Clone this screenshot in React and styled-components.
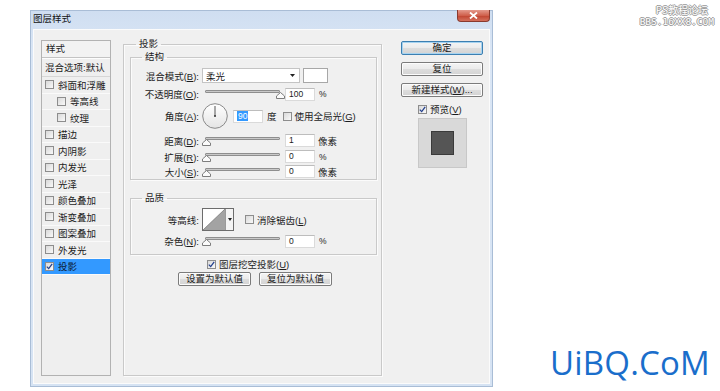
import React from 'react'
import styled, { createGlobalStyle } from 'styled-components'

const GlobalStyle = createGlobalStyle`
  html, body { margin: 0; padding: 0; background: #fff; }
  body {
    font-family: "Liberation Sans", "Noto Sans CJK SC", sans-serif;
    font-size: 9.5px;
    color: #1c1c1c;
  }
  #root { width: 720px; height: 391px; overflow: hidden; }
`

const Page = styled.div`
  position: relative;
  width: 720px;
  height: 391px;
  box-sizing: border-box;
  padding: 10px 0 0 30px;
`

const Window = styled.div`
  width: 463px;
  height: 377px;
  box-sizing: border-box;
  display: flex;
  flex-direction: column;
  background: linear-gradient(#cfdef1, #dae6f5 40px, #d6e3f3);
  border: 1px solid #a9bdd6;
  padding: 0 2px 2px 2px;
`

const TitleBar = styled.div`
  height: 18px;
  flex: none;
  display: flex;
  justify-content: space-between;
  align-items: flex-start;
`

const Title = styled.span`
  line-height: 15px;
  color: #111;
`

const CloseBtn = styled.div`
  width: 33px;
  height: 12px;
  margin-top: -1px;
  box-sizing: border-box;
  border: 1px solid #8a3a2e;
  border-top: none;
  border-radius: 0 0 4px 4px;
  background: linear-gradient(#e49a8c, #d0604c 50%, #c0432f 51%, #d4705c);
  display: flex;
  align-items: center;
  justify-content: center;
`

const Body = styled.div`
  flex: 1;
  box-sizing: border-box;
  background: #f0f0f0;
  border: 1px solid #fbfbfb;
  padding: 10px 0 0 7px;
  display: flex;
  align-items: flex-start;
`

/* ---------- left list ---------- */
const List = styled.div`
  width: 70px;
  height: 336px;
  box-sizing: border-box;
  border: 1px solid #b2b2b2;
  background: #efefef;
  display: flex;
  flex-direction: column;
`

const ListHead = styled.div`
  height: 16px;
  line-height: 16px;
  padding-left: 4px;
  border-bottom: 1px solid #c3c3c3;
  background: #f2f2f2;
`

const ListBlend = styled.div`
  height: 17px;
  line-height: 17px;
  padding-left: 3px;
  border-top: 1px solid #fdfdfd;
  border-bottom: 1px solid #d6d6d6;
  white-space: nowrap;
`

const ListItem = styled.div`
  height: 16.5px;
  box-sizing: border-box;
  display: flex;
  align-items: center;
  gap: 4px;
  padding-left: ${p => (p.$indent ? 15 : 3)}px;
  border-bottom: 1px solid #fafafa;
  background: ${p => (p.$active ? '#3399ff' : 'transparent')};
  color: ${p => (p.$active ? '#0c1a33' : 'inherit')};
  white-space: nowrap;
`

/* ---------- group boxes ---------- */
const Group = styled.fieldset`
  margin: ${p => p.$mt || 0}px 0 0 0;
  min-inline-size: 0;
  box-sizing: border-box;
  border: 1px solid #c9c9c9;
  box-shadow: inset 1px 1px 0 #fbfbfb, 1px 1px 0 #fbfbfb;
  padding: ${p => p.$pad};
  height: ${p => (p.$h ? p.$h + 'px' : 'auto')};
  display: flex;
  flex-direction: column;
`

const Legend = styled.legend`
  line-height: 12px;
  height: 12px;
  padding: 0 3px;
  margin-left: ${p => p.$ml}px;
`

const Main = styled.div`
  width: 259px;
  margin-left: 12px;
  margin-top: -2px;
`

const Row = styled.div`
  display: flex;
  align-items: center;
  height: ${p => p.$h || 14}px;
  margin-top: ${p => p.$mt || 0}px;
  padding-left: ${p => p.$pl || 0}px;
  white-space: nowrap;
`

const Label = styled.span`
  width: 68px;
  flex: none;
  text-align: right;
  margin-right: 3px;
`

const Select = styled.div`
  width: 98px;
  height: 15px;
  box-sizing: border-box;
  background: #fff;
  border: 1px solid #c4c4c4;
  display: flex;
  align-items: center;
  justify-content: space-between;
  padding: 0 4px 0 3px;
`

const Swatch = styled.div`
  width: 25px;
  height: 15px;
  margin-left: 3px;
  box-sizing: border-box;
  background: #fff;
  border: 1px solid #a7a7a7;
`

const SliderWrap = styled.div`
  position: relative;
  width: 80px;
  height: 10px;
  flex: none;
`

const Track = styled.div`
  margin: 1px 0 0 3px;
  width: 75px;
  height: 3px;
  box-sizing: border-box;
  border: 1px solid #8e8e8e;
  border-radius: 1px;
  background: #c9c9c9;
`

const Thumb = styled.svg`
  position: absolute;
  top: 3px;
`

const Field = styled.div`
  width: 30px;
  height: 13px;
  margin-left: ${p => p.$ml ?? 3}px;
  box-sizing: border-box;
  background: #fff;
  border: 1px solid #dadada;
  border-top-color: #bdbdbd;
  padding-left: 3px;
  line-height: 11px;
  font-size: 8.5px;
  flex: none;
`

const Selected = styled.span`
  background: #3399ff;
  color: #fff;
  padding: 0 1px;
`

const Unit = styled.span`
  margin-left: ${p => p.$ml ?? 4}px;
  font-size: ${p => (p.$latin ? '8.5px' : 'inherit')};
`

const CheckLabel = styled.span`
  display: inline-flex;
  align-items: center;
  gap: 3px;
  margin-left: ${p => p.$ml || 0}px;
  white-space: nowrap;
`

const Box = styled.span`
  width: 9px;
  height: 9px;
  box-sizing: border-box;
  border: 1px solid #8d8d8d;
  background: linear-gradient(135deg, #d9d9d9, #f9f9f9);
  display: inline-flex;
  align-items: center;
  justify-content: center;
  flex: none;
`

const Contour = styled.div`
  display: flex;
  height: 23px;
  box-sizing: border-box;
  border: 1px solid #6c6c6c;
  background: #fff;
`

const ContourArrow = styled.div`
  width: 7px;
  border-left: 1px solid #9a9a9a;
  background: #f4f4f4;
  display: flex;
  align-items: center;
  justify-content: center;
`

const Button = styled.div`
  width: ${p => p.$w || 82}px;
  height: 14px;
  box-sizing: border-box;
  border: 1px solid ${p => (p.$default ? '#3c7fb1' : '#7b7b7b')};
  box-shadow: ${p => (p.$default ? 'inset 0 0 0 1px #a6d3f0' : 'inset 0 0 0 1px #fcfcfc')};
  border-radius: 2px;
  background: linear-gradient(#f4f4f4, #ebebeb 50%, #dddddd 51%, #d3d3d3);
  display: flex;
  align-items: center;
  justify-content: center;
  line-height: 12px;
  flex: none;
`

const ButtonRow = styled.div`
  display: flex;
  gap: 8px;
  margin-top: 2px;
  padding-left: 48px;
`

/* ---------- right column ---------- */
const Side = styled.div`
  width: 82px;
  margin-left: 19px;
  margin-top: 1px;
  display: flex;
  flex-direction: column;
  gap: 7px;
`

const PreviewRow = styled.div`
  display: flex;
  align-items: center;
  padding-left: 17px;
  margin-top: -1px;
  height: 12px;
`

const Preview = styled.div`
  width: 49px;
  height: 50px;
  margin: -4px 0 0 17px;
  box-sizing: border-box;
  border: 1px solid #c8c8c8;
  background: #d9d9d9;
  display: flex;
  align-items: center;
  justify-content: center;
`

const PreviewSquare = styled.div`
  width: 23px;
  height: 24px;
  box-sizing: border-box;
  border: 1px solid #3a3a3a;
  background: #555;
`

/* ---------- watermarks ---------- */
const Stamp = styled.div`
  position: absolute;
  top: 4px;
  right: 6px;
  display: flex;
  flex-direction: column;
  align-items: flex-end;
  gap: 1px;
  color: #fff;
  text-shadow: -1px 0 0 #9a9a9a, 1px 0 0 #9a9a9a, 0 -1px 0 #9a9a9a, 0 1px 0 #9a9a9a;
`

const StampLine = styled.span`
  font-family: ${p => (p.$mono ? '"DejaVu Sans Mono", monospace' : '"Noto Sans CJK SC", sans-serif')};
  font-size: ${p => (p.$mono ? '9.5px' : '10px')};
  line-height: ${p => (p.$mono ? 10 : 12)}px;
  margin-right: ${p => (p.$mono ? 0 : 6)}px;
`

const Brand = styled.div`
  position: absolute;
  right: 10px;
  bottom: 8px;
  font-family: "Open Sans", "DejaVu Sans", sans-serif;
  font-size: 33px;
  line-height: 40px;
  color: #1a6ecb;
  letter-spacing: 0.2px;
`

function Check({ checked }) {
  return (
    <Box>
      {checked && (
        <svg width="7" height="7" viewBox="0 0 7 7">
          <path d="M0.8 3.6 L2.7 5.6 L6.2 0.9" stroke="#23408e" strokeWidth="1.3" fill="none" />
        </svg>
      )}
    </Box>
  )
}

function CheckText({ checked, ml, children }) {
  return (
    <CheckLabel $ml={ml}>
      <Check checked={checked} />
      <span>{children}</span>
    </CheckLabel>
  )
}

function Slider({ value }) {
  const left = value * 74
  return (
    <SliderWrap>
      <Track />
      <Thumb width="9" height="7" viewBox="0 0 9 7" style={{ left }}>
        <path d="M0.5 6.5 L0.5 4 L4.5 0.5 L8.5 4 L8.5 6.5 Z" fill="#fbfbfb" stroke="#7d7d7d" />
      </Thumb>
    </SliderWrap>
  )
}

function Dial() {
  return (
    <svg width="26" height="26" viewBox="0 0 26 26" style={{ flex: 'none' }}>
      <defs>
        <linearGradient id="dialg" x1="0" y1="0" x2="0" y2="1">
          <stop offset="0" stopColor="#ffffff" />
          <stop offset="1" stopColor="#e4e4e4" />
        </linearGradient>
      </defs>
      <circle cx="13" cy="13" r="12.3" fill="url(#dialg)" stroke="#8a8a8a" />
      <line x1="13" y1="13" x2="13" y2="3" stroke="#555" strokeWidth="1" />
      <circle cx="13" cy="13" r="1" fill="#333" />
    </svg>
  )
}

function Arrow() {
  return (
    <svg width="5" height="3" viewBox="0 0 5 3">
      <path d="M0 0 L5 0 L2.5 3 Z" fill="#222" />
    </svg>
  )
}

const effects = [
  ['斜面和浮雕'],
  ['等高线', true],
  ['纹理', true],
  ['描边'],
  ['内阴影'],
  ['内发光'],
  ['光泽'],
  ['颜色叠加'],
  ['渐变叠加'],
  ['图案叠加'],
  ['外发光'],
  ['投影', false, true],
]

export default function App() {
  return (
    <Page>
      <GlobalStyle />
      <Window>
        <TitleBar>
          <Title>图层样式</Title>
          <CloseBtn>
            <svg width="9" height="7" viewBox="0 0 9 7">
              <path d="M1 0.5 L8 6.5 M8 0.5 L1 6.5" stroke="#fff" strokeWidth="1.8" />
            </svg>
          </CloseBtn>
        </TitleBar>

        <Body>
          <List>
            <ListHead>样式</ListHead>
            <ListBlend>混合选项:默认</ListBlend>
            {effects.map(([name, indent, active]) => (
              <ListItem key={name} $indent={indent} $active={active}>
                <Check checked={active} />
                <span>{name}</span>
              </ListItem>
            ))}
          </List>

          <Main>
            <Group $h={338} $pad="0 4px 0 6px">
              <Legend $ml={6}>投影</Legend>

              <Group $mt={1} $pad="0 0 1px 0">
                <Legend $ml={11}>结构</Legend>
                <Row $h={15} $mt={5}>
                  <Label>混合模式(<u>B</u>):</Label>
                  <Select>
                    <span>柔光</span>
                    <Arrow />
                  </Select>
                  <Swatch />
                </Row>
                <Row $h={14} $mt={4}>
                  <Label>不透明度(<u>O</u>):</Label>
                  <Slider value={1} />
                  <Field>100</Field>
                  <Unit $latin>%</Unit>
                </Row>
                <Row $h={26} $mt={2}>
                  <Label>角度(<u>A</u>):</Label>
                  <Dial />
                  <Field $ml={5}>
                    <Selected>90</Selected>
                  </Field>
                  <Unit>度</Unit>
                  <CheckText ml={6}>
                    使用全局光(<u>G</u>)
                  </CheckText>
                </Row>
                <Row $h={13} $mt={5}>
                  <Label>距离(<u>D</u>):</Label>
                  <Slider value={0} />
                  <Field>1</Field>
                  <Unit $ml={3}>像素</Unit>
                </Row>
                <Row $h={13} $mt={3}>
                  <Label>扩展(<u>R</u>):</Label>
                  <Slider value={0} />
                  <Field>0</Field>
                  <Unit $latin>%</Unit>
                </Row>
                <Row $h={13} $mt={2}>
                  <Label>大小(<u>S</u>):</Label>
                  <Slider value={0} />
                  <Field>0</Field>
                  <Unit $ml={3}>像素</Unit>
                </Row>
              </Group>

              <Group $mt={12} $pad="0 0 6px 0">
                <Legend $ml={11}>品质</Legend>
                <Row $h={23} $mt={4}>
                  <Label>等高线:</Label>
                  <Contour>
                    <svg width="22" height="21" viewBox="0 0 22 21">
                      <path d="M0 21 L22 0 L22 21 Z" fill="#a3a3a3" />
                      <path d="M0 21 L22 0" stroke="#7a7a7a" strokeWidth="0.8" />
                    </svg>
                    <ContourArrow>
                      <svg width="4" height="3" viewBox="0 0 4 3">
                        <path d="M0 0 L4 0 L2 3 Z" fill="#222" />
                      </svg>
                    </ContourArrow>
                  </Contour>
                  <CheckText ml={11}>
                    消除锯齿(<u>L</u>)
                  </CheckText>
                </Row>
                <Row $h={14} $mt={3}>
                  <Label>杂色(<u>N</u>):</Label>
                  <Slider value={0} />
                  <Field>0</Field>
                  <Unit $latin>%</Unit>
                </Row>
              </Group>

              <Row $h={12} $mt={3} $pl={77}>
                <CheckText checked>
                  图层挖空投影(<u>U</u>)
                </CheckText>
              </Row>
              <ButtonRow>
                <Button $w={73}>设置为默认值</Button>
                <Button $w={73}>复位为默认值</Button>
              </ButtonRow>
            </Group>
          </Main>

          <Side>
            <Button $default>确定</Button>
            <Button>复位</Button>
            <Button>
              <span>新建样式(<u>W</u>)...</span>
            </Button>
            <PreviewRow>
              <CheckText checked>
                预览(<u>V</u>)
              </CheckText>
            </PreviewRow>
            <Preview>
              <PreviewSquare />
            </Preview>
          </Side>
        </Body>
      </Window>

      <Stamp>
        <StampLine>PS教程论坛</StampLine>
        <StampLine $mono>BBS.16XX8.COM</StampLine>
      </Stamp>
      <Brand>UiBQ.CoM</Brand>
    </Page>
  )
}
